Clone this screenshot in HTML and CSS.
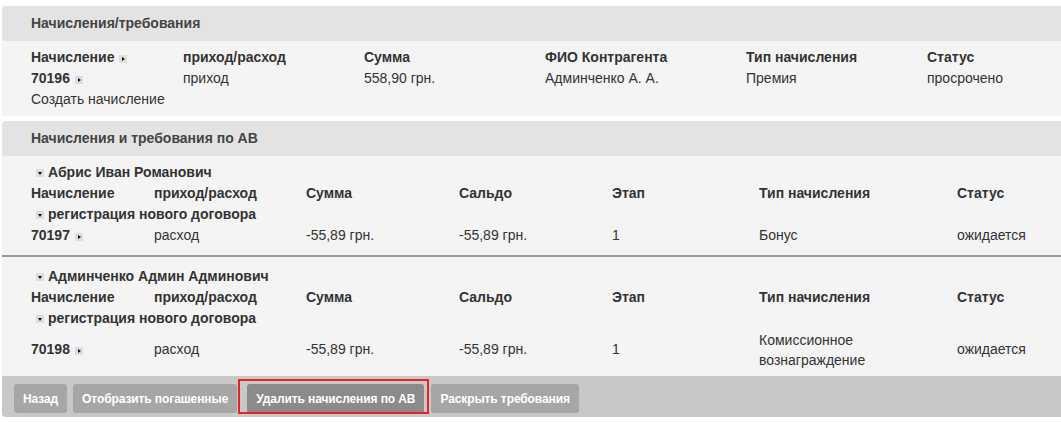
FILE: index.html
```html
<!DOCTYPE html>
<html lang="ru">
<head>
<meta charset="utf-8">
<title>Начисления</title>
<link rel="stylesheet" href="styles.css">
</head>
<body>
<div class="page">
  <section class="panel">
    <div class="panel-head">Начисления/требования</div>
    <div class="panel-body">
      <div class="grid grid-main">
        <div class="th">Начисление<svg class="ico" width="8" height="8" viewBox="0 0 8 8"><rect width="8" height="8" fill="#dedede"/><polygon points="3,2 6,4 3,6" fill="#111"/></svg></div>
        <div class="th">приход/расход</div>
        <div class="th">Сумма</div>
        <div class="th">ФИО Контрагента</div>
        <div class="th">Тип начисления</div>
        <div class="th">Статус</div>

        <div class="th">70196<svg class="ico" width="8" height="8" viewBox="0 0 8 8"><rect width="8" height="8" fill="#dedede"/><polygon points="3,2 6,4 3,6" fill="#111"/></svg></div>
        <div class="td">приход</div>
        <div class="td">558,90 грн.</div>
        <div class="td">Админченко А. А.</div>
        <div class="td">Премия</div>
        <div class="td">просрочено</div>

        <div class="td span-all">Создать начисление</div>
      </div>
    </div>
  </section>

  <section class="panel">
    <div class="panel-head">Начисления и требования по АВ</div>
    <div class="panel-body body-av">
      <div class="grid grid-av">
        <div class="th span-all group"><svg class="ico-down" width="8" height="8" viewBox="0 0 8 8"><rect width="8" height="8" fill="#dedede"/><polygon points="2,3 6,3 4,6" fill="#111"/></svg>Абрис Иван Романович</div>
        <div class="th">Начисление</div>
        <div class="th">приход/расход</div>
        <div class="th">Сумма</div>
        <div class="th">Сальдо</div>
        <div class="th">Этап</div>
        <div class="th">Тип начисления</div>
        <div class="th">Статус</div>
        <div class="th span-all group"><svg class="ico-down" width="8" height="8" viewBox="0 0 8 8"><rect width="8" height="8" fill="#dedede"/><polygon points="2,3 6,3 4,6" fill="#111"/></svg>регистрация нового договора</div>
        <div class="th">70197<svg class="ico" width="8" height="8" viewBox="0 0 8 8"><rect width="8" height="8" fill="#dedede"/><polygon points="3,2 6,4 3,6" fill="#111"/></svg></div>
        <div class="td">расход</div>
        <div class="td">-55,89 грн.</div>
        <div class="td">-55,89 грн.</div>
        <div class="td">1</div>
        <div class="td">Бонус</div>
        <div class="td">ожидается</div>

        <div class="divider"></div>

        <div class="th span-all group"><svg class="ico-down" width="8" height="8" viewBox="0 0 8 8"><rect width="8" height="8" fill="#dedede"/><polygon points="2,3 6,3 4,6" fill="#111"/></svg>Админченко Админ Админович</div>
        <div class="th">Начисление</div>
        <div class="th">приход/расход</div>
        <div class="th">Сумма</div>
        <div class="th">Сальдо</div>
        <div class="th">Этап</div>
        <div class="th">Тип начисления</div>
        <div class="th">Статус</div>
        <div class="th span-all group"><svg class="ico-down" width="8" height="8" viewBox="0 0 8 8"><rect width="8" height="8" fill="#dedede"/><polygon points="2,3 6,3 4,6" fill="#111"/></svg>регистрация нового договора</div>
        <div class="th tall"><span>70198</span><svg class="ico" width="8" height="8" viewBox="0 0 8 8"><rect width="8" height="8" fill="#dedede"/><polygon points="3,2 6,4 3,6" fill="#111"/></svg></div>
        <div class="td tall">расход</div>
        <div class="td tall">-55,89 грн.</div>
        <div class="td tall">-55,89 грн.</div>
        <div class="td tall">1</div>
        <div class="td tall two-line">Комиссионное<br>вознаграждение</div>
        <div class="td tall">ожидается</div>
      </div>
    </div>
    <div class="panel-foot">
      <button class="btn" type="button">Назад</button>
      <button class="btn" type="button">Отобразить погашенные</button>
      <span class="marked"><button class="btn btn-active" type="button">Удалить начисления по АВ</button></span>
      <button class="btn" type="button">Раскрыть требования</button>
    </div>
  </section>
</div>
</body>
</html>
```

FILE: styles.css
```css
html, body {
  margin: 0;
  padding: 0;
  background: #ffffff;
}

body {
  overflow: hidden;
  font-family: "Liberation Sans", Arial, sans-serif;
  font-size: 14px;
  color: #333333;
}

.page {
  padding: 6px 0 0 2px;
  width: 1075px;
}

.panel {
  margin-bottom: 5px;
}

.panel-head {
  height: 35px;
  line-height: 35px;
  padding-left: 29px;
  background: #e3e3e3;
  border-radius: 4px 4px 0 0;
  font-weight: bold;
  color: #444444;
}

.panel-body {
  background: #f4f4f4;
  padding: 6px 0 6px 29px;
}

.body-av {
  padding-top: 6px;
  padding-bottom: 6px;
}

.grid {
  display: grid;
  line-height: 21px;
}

.grid-main {
  grid-template-columns: 152px 181px 181px 201px 181px 1fr;
}

.grid-av {
  grid-template-columns: 123px 152px 153px 153px 147px 198px 1fr;
}

.th {
  font-weight: bold;
  white-space: nowrap;
}

.td {
  white-space: nowrap;
}

.span-all {
  grid-column: 1 / -1;
}

.group {
  padding-left: 5px;
}

.ico {
  display: inline-block;
  margin-left: 5px;
  vertical-align: -1px;
}

.ico-down {
  display: inline-block;
  margin-right: 4px;
  vertical-align: 0;
}

.divider {
  grid-column: 1 / -1;
  height: 2px;
  background: #9a9a9a;
  margin: 9px 0 9px -29px;
}

.tall {
  height: 41px;
  display: flex;
  align-items: center;
}

.tall .ico {
  margin-top: 3px;
}

.two-line {
  line-height: 20px;
  white-space: normal;
}

.panel-foot {
  display: flex;
  align-items: center;
  background: #c8c8c8;
  border-radius: 0 0 4px 4px;
  padding: 8px 12px 4px;
}

.btn {
  height: 29px;
  padding: 0 9px;
  border: none;
  border-radius: 3px;
  background: #a6a6a6;
  color: #ffffff;
  font-family: "Liberation Sans", Arial, sans-serif;
  font-size: 12px;
  font-weight: bold;
  letter-spacing: -0.1px;
  margin: 0 6px 0 0;
}

.btn-active {
  background: #8b8b8b;
  margin: 0;
}

.marked {
  position: relative;
  display: block;
  margin-left: 4px;
  margin-right: 7px;
  height: 29px;
}

.marked::after {
  content: "";
  position: absolute;
  top: -5px;
  right: -5px;
  bottom: -1px;
  left: -9px;
  border: 2px solid #e3222b;
  pointer-events: none;
}
```
